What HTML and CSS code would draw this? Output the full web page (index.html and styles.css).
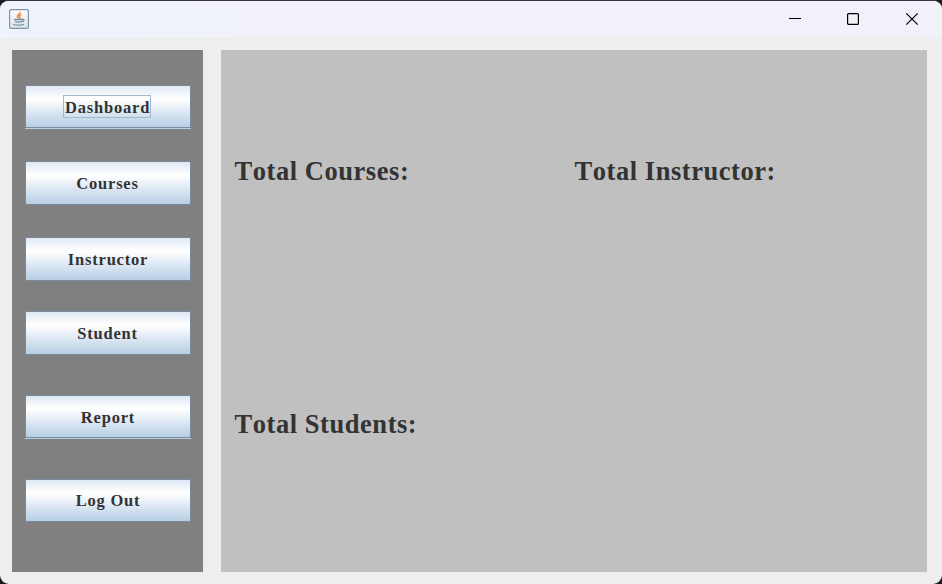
FILE: index.html
```html
<!DOCTYPE html>
<html lang="en">
<head>
<meta charset="utf-8">
<title>Dashboard</title>
<link rel="stylesheet" href="styles.css">
</head>
<body>
<div class="window">
  <header class="titlebar">
    <svg class="app-icon" width="20" height="20" viewBox="0 0 20 20">
      <defs><linearGradient id="tile" x1="0" y1="0" x2="0" y2="1"><stop offset="0" stop-color="#fff"/><stop offset="1" stop-color="#dfe3e7"/></linearGradient></defs>
      <rect x=".6" y=".6" width="18.8" height="18.8" rx="1.5" fill="url(#tile)" stroke="#7c92a5" stroke-width="1.2"/>
      <path d="M10.8 3c1.3 1.8-3.2 2.8-2.4 4.8.2.7 1 1.1 1.2 1.7M12.2 5.4c-2.6 1.2-1.7 2.2-1.2 3 .2.5 0 .9-.5 1.3" fill="none" stroke="#f08a3c" stroke-width="1.6"/>
      <path d="M5 10.5h8.2M6 12.4c1.3.9 5.5.9 7 0M13.2 10.3c2.6-.5 2.2 2.1-.4 2.4M4 15.2c2.2 1.3 9.3 1.3 11 0" fill="none" stroke="#7090aa" stroke-width="1.3"/>
    </svg>
    <div class="controls">
      <svg width="14" height="14" viewBox="0 0 14 14"><path d="M1 6.5h12"/></svg>
      <svg width="14" height="14" viewBox="0 0 14 14"><rect x="1.6" y="1.6" width="10.8" height="10.8" rx="1"/></svg>
      <svg width="14" height="14" viewBox="0 0 14 14"><path d="M1.3 1.3l11.4 11.4M12.7 1.3L1.3 12.7"/></svg>
    </div>
  </header>
  <div class="content">
    <nav class="sidebar">
      <button class="item raised"><span class="focus">Dashboard</span></button>
      <button class="item courses">Courses</button>
      <button class="item instructor">Instructor</button>
      <button class="item student">Student</button>
      <button class="item raised report">Report</button>
      <button class="item logout">Log Out</button>
    </nav>
    <main class="stats">
      <h2>Total Courses:</h2>
      <h2>Total Instructor:</h2>
      <h2>Total Students:</h2>
    </main>
  </div>
</div>
</body>
</html>
```
FILE: styles.css
```css
* { box-sizing: border-box; }
body { margin: 0; background: #1c1a1c; }
.window {
  height: 584px;
  border-top: 1px solid #39353b;
  border-radius: 9px;
  background: #eee;
  overflow: hidden;
  font-family: "Liberation Serif", serif;
  font-weight: bold;
  font-kerning: none;
  color: #333;
}
.titlebar {
  display: flex;
  justify-content: space-between;
  height: 37px;
  padding: 8px 23px 0 9px;
  background: linear-gradient(90deg, #eef3fc, #f1f2f9 25%, #f1f2f9);
}
.controls { display: flex; gap: 44px; padding: 3px 0 0; }
.controls svg { fill: none; stroke: #000; stroke-width: 1.2; }
.controls svg:nth-child(-n+2) { margin-left: -1px; margin-right: 1px; }
.content { display: flex; gap: 18px; padding: 12px 15px 12px 12px; }
.sidebar { display: flex; flex-direction: column; width: 191px; height: 522px; padding: 35px 12px 0 13px; background: gray; }
.item {
  display: flex;
  flex-shrink: 0;
  align-items: center;
  justify-content: center;
  width: 166px;
  height: 44px;
  padding: 1px 0 0;
  border: 1px solid #7a8a99;
  background: linear-gradient(#dde8f3, #fff 30%, #fff 33%, #dce7f3 64%, #b8cfe5);
  color: #333;
  font: inherit;
  font-kerning: none;
  font-size: 16.5px;
  line-height: 20px;
  letter-spacing: 0.8px;
}
.raised { height: 43px; padding-top: 0; box-shadow: 0 1px #b8cfe5; margin-bottom: 1px; }
.focus { width: 88px; height: 23px; margin-right: 2px; padding: 2px 0 0 1px; border: 1px solid #a3b8cc; text-align: left; }
.courses { margin-top: 32px; padding-right: 1px; }
.instructor { margin-top: 32px; }
.student { margin-top: 30px; padding-right: 1px; }
.report { margin-top: 40px; padding-top: 2px; }
.logout { margin-top: 40px; height: 43px; }
.stats {
  display: grid;
  grid-template-columns: 340px 1fr;
  grid-template-rows: 253px 1fr;
  width: 706px;
  height: 522px;
  padding: 105px 0 0 13.5px;
  background: silver;
}
h2 { margin: 0; font-size: 26.5px; line-height: 32px; letter-spacing: 0.55px; }
```
